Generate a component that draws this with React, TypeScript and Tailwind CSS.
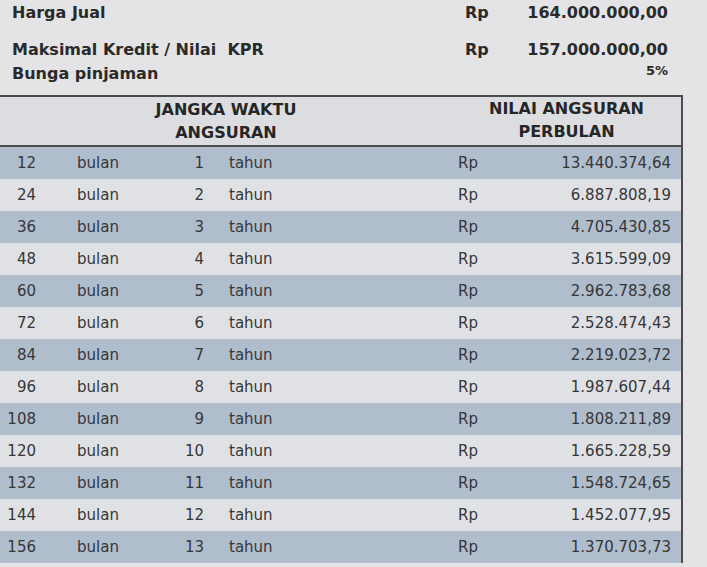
const rows = [
  { bulan: 12, tahun: 1, nilai: "13.440.374,64" },
  { bulan: 24, tahun: 2, nilai: "6.887.808,19" },
  { bulan: 36, tahun: 3, nilai: "4.705.430,85" },
  { bulan: 48, tahun: 4, nilai: "3.615.599,09" },
  { bulan: 60, tahun: 5, nilai: "2.962.783,68" },
  { bulan: 72, tahun: 6, nilai: "2.528.474,43" },
  { bulan: 84, tahun: 7, nilai: "2.219.023,72" },
  { bulan: 96, tahun: 8, nilai: "1.987.607,44" },
  { bulan: 108, tahun: 9, nilai: "1.808.211,89" },
  { bulan: 120, tahun: 10, nilai: "1.665.228,59" },
  { bulan: 132, tahun: 11, nilai: "1.548.724,65" },
  { bulan: 144, tahun: 12, nilai: "1.452.077,95" },
  { bulan: 156, tahun: 13, nilai: "1.370.703,73" },
];

function SummaryRow({
  label,
  value,
  className,
}: {
  label: string;
  value: string;
  className?: string;
}) {
  return (
    <div className={"flex h-[24px] items-center font-bold text-[16px] text-[#2a2a2a] " + (className ?? "")}>
      <div className="w-[453px] whitespace-pre">{label}</div>
      <div className="w-[59px]">Rp</div>
      <div className="w-[144px] text-right">{value}</div>
    </div>
  );
}

export default function App() {
  return (
    <div
      className="relative h-[567px] w-[707px] overflow-hidden bg-[#e4e4e6]"
      style={{ fontFamily: '"DejaVu Sans", Verdana, sans-serif' }}
    >
      <div className="pl-[12px]">
        <SummaryRow label="Harga Jual" value="164.000.000,00" className="mt-[1px]" />
        <SummaryRow label="Maksimal Kredit / Nilai  KPR" value="157.000.000,00" className="mt-[13px]" />
        <div className="flex h-[24px] items-center text-[#2a2a2a]">
          <div className="w-[612px] text-[16px] font-bold">Bunga pinjaman</div>
          <div className="w-[44px] -translate-y-[3px] text-right text-[13px] font-bold">5%</div>
        </div>
      </div>

      <div className="mt-[9px] w-[683px] border-t-2 border-r-2 border-[#4b4b4d]">
        <div className="flex h-[50px] border-b-2 border-[#4b4b4d] bg-[#dcdde0] text-[16px] font-bold leading-[23px] text-[#262626]">
          <div className="w-[452px] pt-[1px] text-center">
            <div>JANGKA WAKTU</div>
            <div>ANGSURAN</div>
          </div>
          <div className="flex-1 text-center">
            <div>NILAI ANGSURAN</div>
            <div>PERBULAN</div>
          </div>
        </div>

        {rows.map((r, i) => (
          <div
            key={r.bulan}
            className={
              "flex h-[32px] items-center text-[15px] text-[#363638] " +
              (i % 2 === 0 ? "bg-[#b0bdcc]" : "bg-[#e0e1e4]")
            }
          >
            <div className="w-[36px] text-right">{r.bulan}</div>
            <div className="w-[41px]" />
            <div className="w-[60px]">bulan</div>
            <div className="w-[67px] text-right">{r.tahun}</div>
            <div className="w-[25px]" />
            <div className="w-[229px]">tahun</div>
            <div className="w-[40px]">Rp</div>
            <div className="w-[173px] text-right">{r.nilai}</div>
          </div>
        ))}
      </div>
    </div>
  );
}
